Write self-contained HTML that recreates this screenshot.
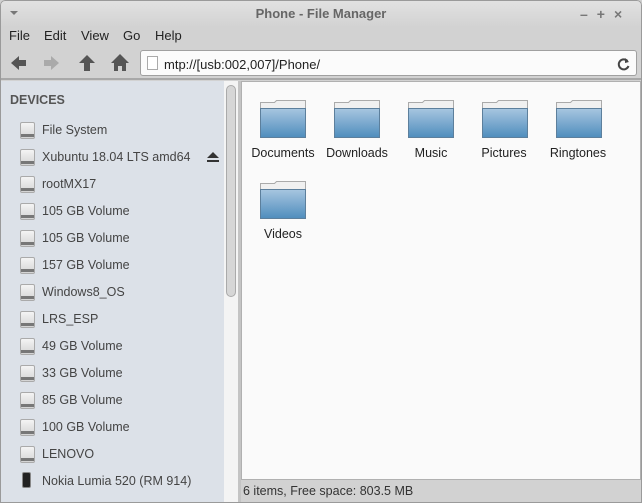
<!DOCTYPE html>
<html><head><meta charset="utf-8"><style>
*{box-sizing:border-box;margin:0;padding:0}
body{width:642px;height:503px;overflow:hidden;background:#d0d0d0;font-family:"Liberation Sans",sans-serif;font-size:12.5px;color:#333;position:relative}
.win{position:absolute;left:0;top:0;width:642px;height:503px;border-radius:5px 5px 0 0;background:#d2d2d2;overflow:hidden}
.frame{position:absolute;left:0;top:0;width:642px;height:503px;border:1px solid #9a9a9a;border-radius:5px 5px 0 0}
.title{position:absolute;left:0;top:0;width:100%;height:27px;background:linear-gradient(#e2e2e2,#d2d2d2)}
.title .t{position:absolute;left:0;right:0;top:6px;text-align:center;font-weight:bold;color:#666;font-size:13px}
.menu{position:absolute;top:28px;left:0;height:20px;width:100%}
.menu span{position:absolute;top:0;font-size:13px;color:#222}
.tb{position:absolute;top:47px;left:0;width:100%;height:33px;border-bottom:2px solid #a8a8a8}
.addr{position:absolute;left:140px;top:3px;width:497px;height:26px;background:#fbfbfb;border:1px solid #a0a0a0;border-radius:3px}
.addr .d{position:absolute;left:6px;top:5px;width:11px;height:14px;border:1px solid #aaa;background:#fff}
.addr .txt{position:absolute;left:23px;top:6px;font-size:13px;color:#222}
.side{position:absolute;left:0;top:81px;width:224px;height:422px;background:#dce1e8}
.track{position:absolute;left:224px;top:81px;width:14px;height:422px;background:#f4f4f4}
.thumb{position:absolute;left:226px;top:85px;width:10px;height:212px;background:#d6d6d6;border:1px solid #aaa;border-radius:5px}
.gap{position:absolute;left:238px;top:81px;width:3px;height:422px;background:#c4c4c4}
.main{position:absolute;left:241px;top:81px;width:400px;height:399px;background:#fafafa;border:1px solid #b0b0b0}
.status{position:absolute;left:243px;top:484px;font-size:12.5px;color:#333}
.dev{position:absolute;left:10px;top:93px;font-weight:bold;color:#555;font-size:12.5px}
.it{position:absolute;left:42px;font-size:12.5px;color:#444}
.ic{position:absolute;left:20px;width:15px;height:17px;border:1px solid #aaa;border-radius:2px;background:linear-gradient(#f4f4f4,#d4d4d4);}
.ic:after{content:"";position:absolute;left:0;right:0;bottom:1px;height:3px;background:#777}
.fl{position:absolute;font-size:12.5px;color:#222;text-align:center;width:90px}
</style></head><body><div class="win">
<div class="title"><div style="position:absolute;left:10px;top:11px;border:4px solid transparent;border-top:4px solid #777"></div>
<div class="t">Phone - File Manager</div>
<div style="position:absolute;left:580px;top:6px;color:#777;font-weight:bold;font-size:14px;letter-spacing:9px">–+×</div></div>
<div class="menu"><span style="left:9px">File</span><span style="left:44px">Edit</span><span style="left:81px">View</span><span style="left:123px">Go</span><span style="left:155px">Help</span></div>
<div class="tb">
<svg width="130" height="30" style="position:absolute;left:0;top:2px">
<path d="M11 14 L19 7 L19 11 L26 11 L26 17 L19 17 L19 21Z" fill="#555"/>
<path d="M59 14 L51 7 L51 11 L44 11 L44 17 L51 17 L51 21Z" fill="#aaa"/>
<path d="M87 6 L95 14 L90 14 L90 22 L84 22 L84 14 L79 14Z" fill="#555"/>
<path d="M120 5 L129 14 L126 14 L126 22 L122 22 L122 17 L118 17 L118 22 L114 22 L114 14 L111 14Z" fill="#555"/>
</svg>
<div class="addr"><div class="d"></div><div class="txt">mtp://[usb:002,007]/Phone/</div>
<svg width="14" height="14" style="position:absolute;right:5px;top:6px"><path d="M10.5 4 A5 5 0 1 0 11.5 9" stroke="#444" stroke-width="2" fill="none"/><path d="M8 1 L12 5 L8 6Z" fill="#444"/></svg></div>
</div>
<div class="side"></div><div class="track"></div><div class="thumb"></div><div class="gap"></div>
<div class="dev">DEVICES</div>
<div class="ic" style="top:122px"></div><div class="it" style="top:123px">File System</div>
<div class="ic" style="top:149px"></div><div class="it" style="top:150px">Xubuntu 18.04 LTS amd64</div>
<svg width="14" height="12" style="position:absolute;left:206px;top:151px"><path d="M1 7 L7 1 L13 7Z M1 9 H13 V11 H1Z" fill="#333"/></svg>
<div class="ic" style="top:176px"></div><div class="it" style="top:177px">rootMX17</div>
<div class="ic" style="top:203px"></div><div class="it" style="top:204px">105 GB Volume</div>
<div class="ic" style="top:230px"></div><div class="it" style="top:231px">105 GB Volume</div>
<div class="ic" style="top:257px"></div><div class="it" style="top:258px">157 GB Volume</div>
<div class="ic" style="top:284px"></div><div class="it" style="top:285px">Windows8_OS</div>
<div class="ic" style="top:311px"></div><div class="it" style="top:312px">LRS_ESP</div>
<div class="ic" style="top:338px"></div><div class="it" style="top:339px">49 GB Volume</div>
<div class="ic" style="top:365px"></div><div class="it" style="top:366px">33 GB Volume</div>
<div class="ic" style="top:392px"></div><div class="it" style="top:393px">85 GB Volume</div>
<div class="ic" style="top:419px"></div><div class="it" style="top:420px">100 GB Volume</div>
<div class="ic" style="top:446px"></div><div class="it" style="top:447px">LENOVO</div>
<div style="position:absolute;left:22px;top:472px;width:9px;height:16px;background:#222;border:1px solid #888;border-radius:2px"></div><div class="it" style="top:474px">Nokia Lumia 520 (RM 914)</div>
<div class="main"></div>
<svg width="400" height="180" style="position:absolute;left:241px;top:81px">
<defs><linearGradient id="g" x1="0" y1="0" x2="0" y2="1"><stop offset="0" stop-color="#a7c6e0"/><stop offset="1" stop-color="#4f8dbd"/></linearGradient>
<g id="fo"><path d="M0 2 H14 L16 0 H45 V10 H0Z" fill="#f0f0f0" stroke="#aaa"/><rect x="0" y="8" width="45" height="29" fill="url(#g)" stroke="#5c7f9c"/></g></defs>
<use href="#fo" x="19.5" y="19.5"/><use href="#fo" x="93.5" y="19.5"/><use href="#fo" x="167.5" y="19.5"/><use href="#fo" x="241.5" y="19.5"/><use href="#fo" x="315.5" y="19.5"/><use href="#fo" x="19.5" y="100.5"/>
</svg>
<div class="fl" style="left:238px;top:146px">Documents</div>
<div class="fl" style="left:312px;top:146px">Downloads</div>
<div class="fl" style="left:386px;top:146px">Music</div>
<div class="fl" style="left:459px;top:146px">Pictures</div>
<div class="fl" style="left:533px;top:146px">Ringtones</div>
<div class="fl" style="left:238px;top:227px">Videos</div>
<div class="status">6 items, Free space: 803.5 MB</div>
<div class="frame"></div>
</div></body></html>
